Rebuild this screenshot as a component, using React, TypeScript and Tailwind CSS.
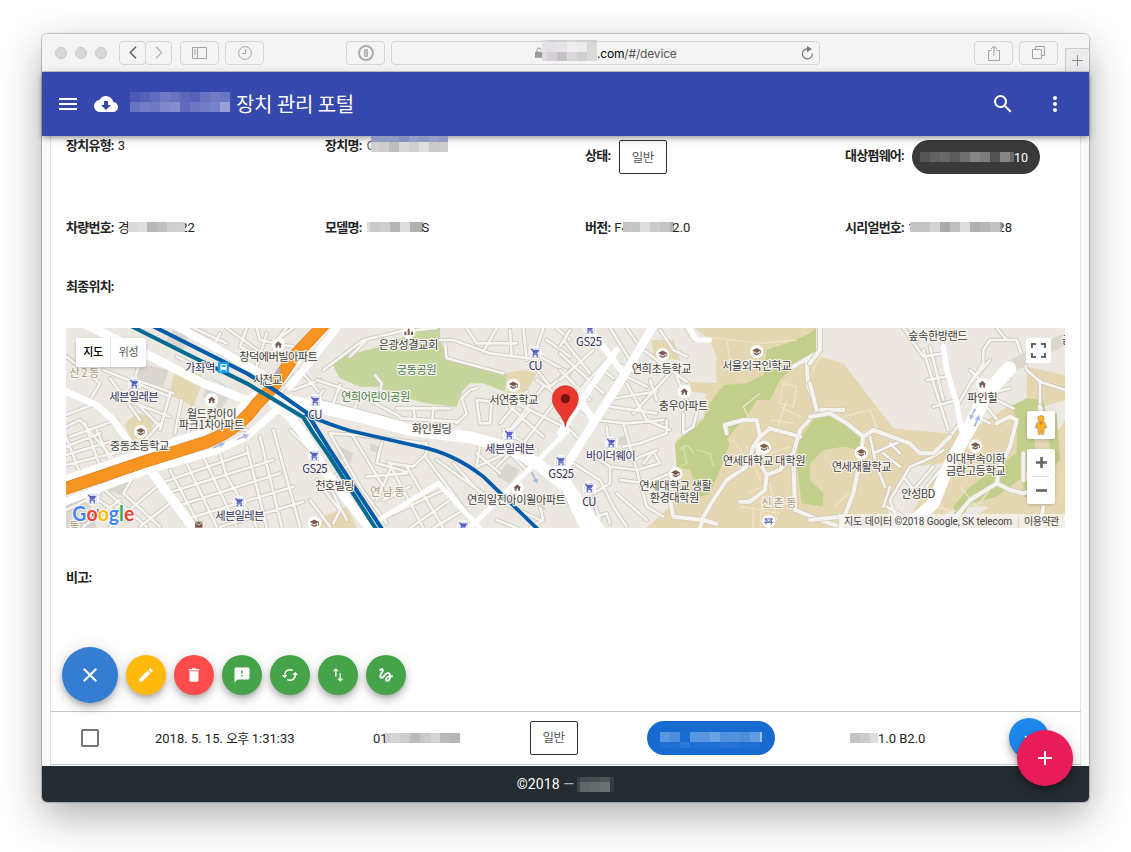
import React from "react";
import {
  MdAdd,
  MdCached,
  MdClose,
  MdCloudDownload,
  MdDelete,
  MdEdit,
  MdExpandMore,
  MdFeedback,
  MdGesture,
  MdHome,
  MdImportExport,
  MdMenu,
  MdMoreVert,
  MdSchool,
  MdSearch,
  MdShoppingCart,
} from "react-icons/md";

/* ---------- masked values ---------- */

function Mosaic({ rows, className = "" }: { rows: { h: number; cells: string[]; first?: number }[]; className?: string }) {
  return (
    <span className={`inline-block shrink-0 overflow-hidden ${className}`}>
      {rows.map((r, i) => (
        <span key={i} className="flex" style={{ height: r.h }}>
          {r.cells.map((c, j) => (
            <span key={j} className="shrink-0" style={{ width: j === 0 && r.first ? r.first : 10, backgroundColor: c }} />
          ))}
        </span>
      ))}
    </span>
  );
}

/* ---------- browser toolbar ---------- */

const toolButton = "flex h-6 items-center justify-center rounded-[4px] border border-[#d5d5d5] bg-[#f4f4f4] text-[#a5a5a5]";

function BrowserBar() {
  return (
    <div className="relative flex h-[38px] items-center rounded-t-[5px] border-b border-[#c6c4c9] bg-[#f4f4f4] pl-[13px]">
      <div className="flex gap-2">
        {[0, 1, 2].map((i) => (
          <span key={i} className="h-3 w-3 rounded-full border border-[#c9c9c9] bg-[#d8d8d8]" />
        ))}
      </div>
      <div className="ml-[12px] flex">
        <span className={`${toolButton} w-[27px]`}>
          <svg width="8" height="13" viewBox="0 0 8 13" fill="none" stroke="#666" strokeWidth="1.6"><path d="M7 .8L1.3 6.5 7 12.2" /></svg>
        </span>
        <span className={`${toolButton} -ml-px w-[27px]`}>
          <svg width="8" height="13" viewBox="0 0 8 13" fill="none" stroke="#b5b5b5" strokeWidth="1.3"><path d="M1 .8l5.7 5.7L1 12.2" /></svg>
        </span>
      </div>
      <span className={`${toolButton} ml-2 w-[39px]`}>
        <svg width="15" height="12" viewBox="0 0 15 12" fill="none" stroke="currentColor"><path d="M.5.5h14v11H.5zM5.5.5v11M2 3h2M2 5h2M2 7h2" /></svg>
      </span>
      <span className={`${toolButton} ml-[6px] w-[39px]`}>
        <svg width="14" height="14" viewBox="0 0 14 14" fill="none" stroke="currentColor"><circle cx="7" cy="7" r="6.4" /><path d="M7.5 3v4.5H4" /></svg>
      </span>
      <span className={`${toolButton} ml-[82px] w-[39px]`}>
        <svg width="16" height="16" viewBox="0 0 16 16"><circle cx="8" cy="8" r="7" fill="none" stroke="#adadad" strokeWidth="2" /><rect x="6" y="4" width="4" height="8" rx="1.5" fill="#adadad" /><path d="M8 5v6" stroke="#dedede" /></svg>
      </span>
      <div className={`${toolButton} relative ml-[6px] w-[429px]`}>
        <div className="flex h-full w-full items-center pl-[143px]">
          <svg className="-mt-px" width="7" height="11" viewBox="0 0 7 11"><path d="M2 5V3a2 2 0 014 0" fill="none" stroke="#999" /><rect x="0" y="4.8" width="7" height="6" rx=".6" fill="#999" /></svg>
          <Mosaic
            className="-mt-[4px] w-[55px]"
            rows={[
              { h: 2, first: 5, cells: ["#dcdcdc", "#cfcfcf", "#cfcfcf", "#d2d2d2", "#cfcfcf", "#cfcfcf", "#cfcfcf"] },
              { h: 10, first: 5, cells: ["#e4e2e6", "#e4e2e8", "#e6e4e8", "#eeecef", "#ebebeb", "#d9d9d9", "#e2e2e2"] },
              { h: 9, first: 5, cells: ["#dddbde", "#d4d0d5", "#c4c1c4", "#d9d7db", "#d0d0d0", "#dadada", "#cfcfcf"] },
            ]}
          />
          <span className="pt-[2px] font-[Inter] text-[12px] leading-6 tracking-[-0.17px] text-[#555]"><span className="text-black">.com</span>/#/device</span>
        </div>
        <svg className="absolute right-[5px] top-[4px]" width="13" height="14" viewBox="0 0 13 14"><path d="M7.4 3A5 5 0 1011.4 7.6" fill="none" stroke="#777" strokeWidth="1.2" /><path d="M6 0l5 3-5 3z" fill="#777" /></svg>
      </div>
      <span className={`${toolButton} ml-[154px] w-[39px]`}>
        <svg width="12" height="16" viewBox="0 0 12 16" fill="none" stroke="currentColor"><path d="M3.5 5.5h-3v10h11v-10h-3M6 11V1M3 4l3-3 3 3" /></svg>
      </span>
      <span className={`${toolButton} ml-[6px] w-[39px]`}>
        <svg width="13" height="13" viewBox="0 0 13 13" fill="none" stroke="currentColor"><path d="M.5 3.5h9v9h-9zM3.5 3.5v-3h9v9h-3" /></svg>
      </span>
      <span className="ml-[7px] flex h-[23px] w-[24px] items-center justify-center self-end border-l border-t border-[#cbcbcb] bg-[#ebeaed]">
        <svg width="11" height="11" viewBox="0 0 11 11" stroke="#888"><path d="M5.5 0v11M0 5.5h11" /></svg>
      </span>
    </div>
  );
}

/* ---------- application bar ---------- */

function AppBar() {
  return (
    <header className="relative z-10 flex h-16 items-center bg-[#3648ac] pl-[14px] text-white shadow-[0_2px_4px_-1px_rgba(0,0,0,.2),0_4px_5px_0_rgba(0,0,0,.14),0_1px_10px_0_rgba(0,0,0,.12)]">
      <MdMenu size={24} />
      <MdCloudDownload size={24} className="ml-[14px]" />
      <Mosaic
        className="-mt-1 ml-3 w-[101px]"
        rows={[
          { h: 10, cells: ["#4d5ab5", "#5562b9", "#5f6bbd", "#6e79c4", "#6874c1", "#5c68bc", "#5562b8", "#6773c0", "#6f7ac4", "#6b76c1", "#4251b0"] },
          { h: 10, cells: ["#6874c0", "#727dc5", "#6f79c3", "#7f89cb", "#858ecd", "#5f6bbd", "#6c77c2", "#727dc5", "#7781c7", "#99a0d5", "#4251b0"] },
        ]}
      />
      <h1 className="ml-[5px] pt-[2px] text-[20px] font-normal leading-7 tracking-[-0.3px]">장치 관리 포털</h1>
      <MdSearch size={24} className="ml-auto" />
      <MdMoreVert size={24} className="ml-7 mr-[22px]" />
    </header>
  );
}

/* ---------- map ---------- */

type Label = [number, number, number, string, string?];

const labels: Label[] = [
  [28, 118, 158, "산2동", "area"],
  [375, 466, 142, "가좌역", "shop"],
  [538, 774, 111, "창덕에버빌아파트"],
  [580, 667, 180, "사천교"],
  [148, 296, 231, "세븐일레븐", "shop"],
  [380, 530, 280, "월드컵아이"],
  [356, 553, 315, "파크1차아파트"],
  [150, 328, 378, "중동초등학교"],
  [745, 787, 285, "CU", "shop"],
  [727, 803, 447, "GS25", "shop"],
  [766, 883, 497, "천호빌딩"],
  [466, 613, 587, "세븐일레븐", "shop"],
  [80, 118, 580, "CU", "shop"],
  [28, 58, 617, "동", "area"],
  [956, 1135, 74, "은광성결교회"],
  [1010, 1130, 150, "궁동공원", "park"],
  [843, 1051, 229, "연희어린이공원", "park"],
  [1055, 1175, 327, "화인빌딩"],
  [1288, 1435, 238, "서연중학교"],
  [1406, 1447, 137, "CU", "shop"],
  [1275, 1425, 386, "세븐일레븐", "shop"],
  [1465, 1542, 461, "GS25", "shop"],
  [1221, 1518, 540, "연희일진아이윌아파트"],
  [930, 1035, 515, "연남동", "area"],
  [1548, 1626, 66, "GS25", "shop"],
  [1715, 1895, 145, "연희초등학교"],
  [1986, 2195, 137, "서울외국인학교"],
  [1796, 1945, 256, "충우아파트"],
  [1578, 1727, 407, "바이더웨이", "shop"],
  [1988, 2237, 422, "연세대학교 대학원"],
  [1738, 1956, 498, "연세대학교 생활"],
  [1769, 1918, 534, "환경대학원"],
  [1567, 1609, 545, "CU", "shop"],
  [2104, 2209, 548, "신촌동", "area"],
  [2545, 2723, 48, "숲속한방랜드"],
  [2722, 2813, 233, "파인힐"],
  [2315, 2495, 440, "연세재활학교"],
  [2658, 2837, 417, "이대부속이화"],
  [2658, 2837, 452, "금란고등학교"],
  [2524, 2626, 521, "안성BD"],
  [3005, 3040, 58, "금"],
];

const labelFill: Record<string, string> = { shop: "#2f3263", park: "#447c48", area: "#a79c85" };

const pois: [string, number, number][] = [
  ["cart", 223, 192], ["home", 655, 74], ["home", 455, 240], ["school", 242, 335], ["cart", 766, 243], ["cart", 763, 408],
  ["cart", 97, 537], ["cart", 538, 547], ["school", 763, 610], ["church", 1046, 36], ["cart", 1426, 99], ["school", 1360, 196],
  ["cart", 1348, 345], ["cart", 1503, 424], ["home", 1372, 503], ["cart", 1210, 620], ["cart", 1590, 28], ["school", 1808, 103],
  ["school", 2090, 95], ["home", 1873, 215], ["cart", 1654, 369], ["school", 2112, 382], ["school", 1847, 461], ["cart", 1588, 504],
  ["gate", 2126, 604], ["home", 2767, 193], ["school", 2404, 398], ["school", 2746, 378],
];

function Poi({ kind, x, y }: { kind: string; x: number; y: number }) {
  const at = { x: x - 14, y: y - 14, size: 28 };
  return (
    <g>
      <circle cx={x} cy={y} r="20" fill="#fff" />
      {kind === "cart" && <MdShoppingCart {...at} color="#5763bd" stroke="#5763bd" strokeWidth="1" />}
      {kind === "home" && <MdHome {...at} color="#7d5c50" />}
      {kind === "school" && <MdSchool x={x - 15} y={y - 15} size={30} color="#7d5c50" />}
      {kind === "church" && <path transform={`translate(${x} ${y})`} d="M-13 9V-1h6V9zm10 0v-16l3-5 3 5V9zM7 9V-1h6V9z" fill="#7d5c50" />}
      {kind === "gate" && <path transform={`translate(${x} ${y})`} d="M-13-7h26M-13 3h26M-8-9V10M8-9V10M-8-6L0 3l8-9" stroke="#5763bd" strokeWidth="3" fill="none" />}
    </g>
  );
}

/* Street geometry, one entry per 250px sheet of the map. */
const streets: { dx: number; d: string }[] = [
  {
    dx: 0,
    d: "M18 285L110 250M18 320L60 300 180 440M30 350L170 300M18 380L120 340M18 405L150 365M18 435L180 395M75 310L120 440M110 330L150 420M18 350L60 460M150 175L240 300M20 110L120 190 90 240M130 150L330 230M240 120L210 230 300 320M200 240L330 290M230 180L340 220M260 110L340 150M350 110L420 145M350 300L560 330M330 220L300 330M365 240L345 340M400 260L385 340M430 180L560 240M300 310L230 390M420 50L560 130M500 24L620 110M560 24L540 80 620 120M590 24L600 60 700 80M700 24L650 60 680 24M620 40L590 140M400 24L500 70M480 40L460 80M330 450L420 620M380 430L470 620M430 410L530 620M480 400L500 470 590 620M300 490L560 400M320 520L640 420M345 560L660 460M370 600L700 500M480 620L730 545M560 380L620 620M600 350L665 620M640 330L720 620M690 330L760 400M100 480L260 620M60 500L200 600M18 570L120 520M220 470L190 520 300 620M150 620L290 500M70 620L180 540M240 620L330 550M700 170L660 220M720 150L780 220M700 210L780 180",
  },
  {
    dx: 750,
    d: "M20 180L140 220 270 290M40 210L20 240 250 300M90 195L70 250M150 222L130 275M260 265L420 265M270 295L440 305M310 262L320 335M370 262L365 330M440 310L470 280 455 235 480 210 500 205M500 240L510 310 540 310 545 245 505 240M40 150L160 60 270 35 380 24M120 110L170 60M390 60L430 60 540 100 660 115M405 70L410 115 580 160M470 24L500 70 620 70M560 24L520 95M600 30L605 105M640 24L650 120M700 24L665 130 720 200M740 24L780 60M690 110L780 160M680 180L780 250M600 260L700 350M650 215L570 310M700 200L600 330M570 370L660 270M740 240L640 370M590 235L780 330M580 330L680 390M720 200L780 150M710 60L780 110M60 340L140 345 345 370M60 340L150 500 230 610M130 350L220 500M215 370L200 430 290 455M350 370L350 400 310 440 240 430M235 425L340 624M290 440L400 624M345 410L480 590M430 430L520 530M380 420L560 550M500 400L570 460M510 370L500 440 590 400M560 440L600 400 650 450M560 540L690 600M220 540L300 500M170 470L290 460M230 590L400 510M300 624L420 540M370 624L460 570M560 600L620 624M60 500L110 600M20 480L90 570 70 610M690 560L700 600 660 624M0 540L60 620M110 440L60 480M240 450L200 540M195 165L215 190 210 220 250 225",
  },
  {
    dx: 1500,
    d: "M180 160L260 200M160 235L290 215M200 190L260 300 330 330M0 220L80 280M110 300L200 310 310 300M140 320L150 400M190 310L230 450 260 560 310 590M150 260L290 280M220 280L330 160M270 180L290 240M320 300L320 340 240 370 190 380M370 280L370 340 400 320 410 280M350 170L380 240M250 90L380 185M300 30L340 90 380 110M90 400L150 440 230 450M120 400L220 420 290 390M150 440L150 490 100 520M40 430L120 480 160 560 200 620M100 540L120 600 90 620M170 520L260 600M180 480L260 490 330 460M230 450L300 430 280 395 250 430M0 150L90 240M0 100L130 220M10 60L90 160M30 30L0 80M0 180L100 90M50 220L150 110M150 24L210 120M200 24L240 80M20 280L90 180M0 300L60 360M130 150L160 175M110 590L140 580 150 610M170 130L230 160M380 24L400 60",
  },
  {
    dx: 2250,
    d: "M340 90L380 220 415 330M360 80L400 240M280 24L340 110 400 100M350 180L410 170M370 260L440 240M390 24L400 80M440 260L480 190 540 120M480 190L520 130 520 90 540 60 620 60 650 150 690 185 765 210M560 24L590 60M300 24L320 60M190 400L280 360M220 400L270 440M240 370L270 400M240 540L300 440 370 410 400 390M280 470L320 520M260 600L240 540M550 180L600 180M560 215L600 205M560 240L610 265M530 260L570 310M500 290L540 310M690 180L690 260M180 350L200 440 225 500M240 500L220 560M420 350L450 310M310 510L370 440M350 500L390 450M230 560L300 600M480 150L530 200",
  },
];

const campusRoads: { dx: number; d: string }[] = [
  {
    dx: 1500,
    d: "M500 340L495 315 550 300 590 300 600 350 580 380 560 440 500 480 460 540 430 590M600 350L630 325 720 350M850 270L775 270 720 330 700 400 660 450 620 465 600 430 590 370M620 465L615 510 570 545 540 545M780 90L740 130 745 200 775 275M700 140L760 105M700 420L705 570 780 600 840 620M330 540L340 590 430 600 470 612M430 590L420 624M330 480L320 540 380 540",
  },
  {
    dx: 2250,
    d: "M0 290L60 280 110 310 160 350 190 330 300 370 330 400 370 400 420 350M160 350L150 420 130 520 90 624M30 24L30 90 0 130M0 190L20 270M620 300L600 380 570 440 560 490 600 510 640 520 700 500M560 490L480 540 430 600M620 300L600 290 560 310M0 600L90 590M700 560L690 624M690 260L700 330M640 480L640 400",
  },
];

const GREEN = "#c1cf8b";
const TAN = "#e5d7b1";

function MapDrawing() {
  return (
    <svg className="block h-[200px] w-[999px]" viewBox="18 24 2997 600">
      <rect x="18" y="24" width="2997" height="600" fill="#ece8e1" />

      <g fill="#dad6ce">
        <path d="M240 130L325 150 310 200 235 175zM440 195L520 215 480 270 430 230zM340 30L385 50 370 90 310 75zM130 470L200 490 195 530 120 500zM18 530L90 540 110 624 18 624z" />
        <path d="M840 380L880 400 870 430 830 410zM930 370L960 380 950 400 930 390zM1340 430L1380 450 1350 490 1310 470z" />
        <path d="M1680 350L1700 350 1700 370 1660 380z" />
      </g>
      <path fill={TAN} d="M345 140L425 165 430 180 400 258 328 225zM205 300L235 280 285 295 268 355 215 360 195 315zM1335 160L1390 150 1430 160 1400 215 1340 220zM790 590L860 560 890 624 780 624zM1775 60L1840 60 1860 120 1780 115z" />
      <path fill={TAN} d="M1890 185L1970 190 1965 100 1950 60 1905 24 2268 24 2268 106 2350 130 2500 325 2660 340 2660 440 2550 520 2480 624 1760 624 1850 540 1850 360 1930 290 1940 220 1895 215z" />
      <path fill={TAN} d="M2660 340L2750 320 2850 255 2890 300 2890 560 2690 560 2600 624 2540 624zM2900 140L3015 165 3015 240 2950 260 2900 230zM2900 480L3015 300V624H2700z" />
      <path fill="#ece8e1" d="M1900 24L1940 70 1970 110 1960 170 1900 180 1870 100zM2550 440L2650 430 2560 560 2500 624 2480 560z" />
      <path fill="#c5d69d" d="M815 130L860 105 960 80 1080 30 1140 24 1140 60 1160 110 1340 165 1335 215 1270 190 1230 190 1205 215 1190 260 1100 250 1000 225 960 200 900 200 840 175z" />
      <g fill={GREEN}>
        <path d="M2120 90L2180 70 2250 40 2268 24 2268 95 2200 140 2160 180 2130 240 2090 240 2060 290 2030 320 2000 360 2010 370 1980 450 1950 520 1920 530 1890 450 1850 440 1845 370 1930 300 1950 250 1990 195 2060 190 2110 165z" />
        <path d="M2300 282L2360 300 2400 345 2400 390 2350 380 2290 390 2250 430 2250 480 2290 520 2290 560 2225 550 2210 430 2215 360 2260 300z" />
        <path d="M2900 235L2950 240 2960 290 2930 420 2890 470 2810 530 2730 550 2690 624 2680 560 2730 500 2810 440 2870 400 2870 290 2850 260z" />
        <path d="M2950 270L2990 280 3000 420 2940 490 2900 470zM2890 480L2940 500 2940 540 2890 530z" />
        <path d="M560 340L600 310 610 320 580 345z" />
      </g>
      <path fill={TAN} d="M2920 330L2960 310 2975 420 2930 440z" />
      <path fill="#dfc5c4" d="M2370 590L2420 600 2410 624 2360 624z" />

      <g fill="none" stroke="#eee4ca" strokeWidth="4">
        <path d="M1930 50L2100 70 2210 60M2000 60L2010 120M2170 190L2210 200 2200 260 2160 250zM2160 260L2220 290M2130 300L2200 310M2060 380L2100 480M2130 400L2190 380M2060 520L2130 490 2150 600M2080 560L2080 624M2110 500L2100 620M2040 560L2160 580M2020 360L2060 420M2180 240L2150 330M2070 300L2050 260 2100 220" />
        <path d="M2350 290L2430 270 2450 320 2400 340M2280 110L2250 170M2700 500L2750 560 2820 470M2620 530L2700 620M2740 430L2790 440M2620 560L2720 580M2320 560L2380 510" />
      </g>
      <g fill="none" stroke="#cfdfa4" strokeWidth="5">
        <path d="M1870 380L1880 430 1860 440M1910 390L1950 400 1960 440M1860 390Q1880 360 1900 400" />
      </g>

      {streets.map((s) => (
        <g key={s.dx} transform={`translate(${s.dx} 0)`} fill="none" strokeLinecap="round" strokeLinejoin="round">
          <path d={s.d} stroke="#cdc6bb" strokeWidth="13" />
          <path d={s.d} stroke="#f6f4f0" strokeWidth="8" />
        </g>
      ))}
      {campusRoads.map((s) => (
        <g key={s.dx} transform={`translate(${s.dx} 0)`} fill="none" strokeLinecap="round" strokeLinejoin="round">
          <path d={s.d} stroke="#d3cab9" strokeWidth="17" />
          <path d={s.d} stroke="#f5f3ee" strokeWidth="12" />
        </g>
      ))}

      <path d="M2850 140L3030 50" fill="none" stroke="#dcd8cf" strokeWidth="36" />

      {/* main roads */}
      <g fill="none" stroke="#fff" strokeLinejoin="round" strokeLinecap="round">
        <path d="M70 10L270 108 420 185 570 245" strokeWidth="26" />
        <path d="M335 10L470 85 610 165" strokeWidth="24" />
        <path d="M0 482L300 378 430 335 520 285 580 225" strokeWidth="20" />
        <path d="M0 552L260 452 470 392 560 350 650 270" strokeWidth="22" />
        <path d="M18 215L110 255 160 300 210 370" strokeWidth="20" />
        <path d="M275 455L330 530 400 624" strokeWidth="28" />
        <path d="M640 250L690 290 750 370 800 460 940 640" strokeWidth="28" />
        <path d="M640 215L720 110 800 20M690 200L830 24" strokeWidth="22" />
        <path d="M660 240L750 255 900 290 1050 330 1230 352 1350 385 1430 430 1520 500 1580 624" strokeWidth="36" />
        <path d="M1490 460L1560 560 1620 640" strokeWidth="44" />
        <path d="M950 605L1135 490 1260 624M1220 634L1430 425 1520 335" strokeWidth="15" />
        <path d="M1500 340L1600 190 1670 90M1600 40L1690 160M1560 240L1600 300" strokeWidth="19" />
        <path d="M1510 450L1600 310 1690 170 1790 0" strokeWidth="25" />
        <path d="M1890 24L1910 60 1950 60" strokeWidth="14" />
        <path d="M2650 80L2660 150 2690 250 2705 330" strokeWidth="16" />
        <path d="M2540 624L2620 550 2660 450 2720 340" strokeWidth="38" />
        <path d="M2720 340L2780 220 2848 145" strokeWidth="42" />
      </g>
      <path d="M1432 520L1460 575 1440 560zM1500 500L1530 560 1512 545z" fill="#d9d4ca" />

      <path d="M0 511L250 426 440 366Q540 325 590 252L640 200 700 112 800 5" fill="none" stroke="#df8524" strokeWidth="38" />
      <path d="M0 511L250 426 440 366Q540 325 590 252L640 200 700 112 800 5" fill="none" stroke="#f89522" strokeWidth="33" />

      {/* railway */}
      <g fill="none" strokeLinejoin="round">
        <path d="M470 100L510 124M455 175L500 200" stroke="#6fc0e8" strokeWidth="2" strokeDasharray="4 2" />
        <path d="M205 14L400 112 560 190 640 238 730 292 760 340 800 397 950 630" stroke="#016a91" strokeWidth="12" />
        <path d="M270 14L560 160 640 208 740 278 810 390 968 630" stroke="#005ba9" strokeWidth="12" />
        <path d="M735 282Q810 315 870 332L1080 380Q1180 400 1270 470L1440 634" stroke="#005ba9" strokeWidth="11" />
      </g>

      <g fill="#a9b4e6">
        <path d="M458 383l20-11-2-6 19 3-13 14-2-6-20 9zM530 357l20-9-2-6 20 2-13 14-2-6-20 8z" />
        <path d="M642 165l12-20 8 2-10 22zM1418 456l10 22 6-1-2 14-14-10 6-3-12-20zM2744 265l-10 20-6-2 2 16 12-10-5-3 12-18zM2740 318l10-18-6-2 14-14 2 18-5-1-9 19z" />
      </g>

      <g transform="translate(474 126)">
        <rect width="33" height="33" rx="3" fill="#159de8" />
        <rect x="7" y="6" width="19" height="17" rx="3" fill="#fff" />
        <path d="M10 10h13v5H10z" fill="#159de8" />
        <path d="M10 23l-3 5M23 23l3 5" stroke="#fff" strokeWidth="3" />
      </g>

      {pois.map(([k, x, y], i) => (
        <Poi key={i} kind={k} x={x} y={y} />
      ))}
      <path d="M405 605h22v18h-22z" fill="#7d5c50" />
      <path d="M406 607l10 8 10-8" fill="none" stroke="#fff" strokeWidth="2.5" />

      <g fontFamily='"Noto Sans CJK KR", sans-serif' fontSize="34" stroke="#f7f4ee" strokeWidth="7" strokeLinejoin="round">
        {labels.map(([x1, x2, y, text, kind], i) => (
          <text key={i} x={x1} y={y + 13} textLength={x2 - x1} fill={labelFill[kind ?? ""] ?? "#3f3f3f"} style={{ paintOrder: "stroke" }}>
            {text}
          </text>
        ))}
      </g>

      <g transform="translate(1516 198)">
        <path d="M0 122C-4 88-39 72-39 38a39 39 0 0178 0C39 72 4 88 0 122z" fill="#e9392f" stroke="#c9261d" strokeWidth="2" />
        <circle cy="38" r="14" fill="#7c130e" />
      </g>

      <text x="37" y="603" textLength="186" lengthAdjust="spacingAndGlyphs" fontFamily="Lato, sans-serif" fontWeight="700" fontSize="61" stroke="#fff" strokeWidth="6" style={{ paintOrder: "stroke" }}>
        <tspan fill="#4285f4">G</tspan>
        <tspan fill="#ea4335">o</tspan>
        <tspan fill="#fbbc05">o</tspan>
        <tspan fill="#4285f4">g</tspan>
        <tspan fill="#34a853">l</tspan>
        <tspan fill="#ea4335">e</tspan>
      </text>
    </svg>
  );
}

function MapPanel() {
  return (
    <div className="relative h-[200px] w-[999px] overflow-hidden">
      <MapDrawing />
      <div className="absolute left-[10px] top-[10px] flex h-[29px] w-[70px] rounded-[2px] bg-white text-center text-[11px] leading-[29px] tracking-[-0.4px] shadow-[0_1px_4px_-1px_rgba(0,0,0,.3)]">
        <span className="w-[35px] border-r border-[#e6e6e6] font-medium text-black">지도</span>
        <span className="w-[35px] text-[#565656]">위성</span>
      </div>
      <div className="absolute left-[960px] top-[10px] flex h-[25px] w-[25px] items-center justify-center bg-white">
        <svg width="15" height="15" viewBox="0 0 15 15" fill="none" stroke="#666" strokeWidth="2"><path d="M1 5V1h4M10 1h4v4M14 10v4h-4M5 14H1v-4" /></svg>
      </div>
      <div className="absolute left-[961px] top-[83px] flex h-7 w-7 items-center justify-center rounded-[2px] bg-white shadow-[0_1px_4px_-1px_rgba(0,0,0,.3)]">
        <svg width="14" height="20" viewBox="0 0 14 20"><path d="M3 7.2h8l1.8 5.6-1.8.6-.6-1.6-.6 7.6H7.6L7 15l-.6 4.4H4.2l-.6-7.6-.6 1.6-1.8-.6z" fill="#fbb321" stroke="#8f8a80" strokeWidth=".5" /><circle cx="7" cy="3.7" r="3.2" fill="#fbb321" stroke="#a08a60" strokeWidth=".6" /><path d="M4.5 7.2L7 10l2.5-2.8z" fill="#e57b1c" /></svg>
      </div>
      <div className="absolute left-[961px] top-[121px] flex h-[55px] w-7 flex-col items-center rounded-[2px] bg-white shadow-[0_1px_4px_-1px_rgba(0,0,0,.3)]">
        <span className="flex h-[27px] items-center"><svg width="11" height="11" viewBox="0 0 11 11" stroke="#666" strokeWidth="2.6"><path d="M5.5 0v11M0 5.5h11" /></svg></span>
        <span className="h-px w-[18px] bg-[#e2e2e2]" />
        <span className="flex h-[27px] items-center"><svg width="11" height="11" viewBox="0 0 11 11" stroke="#666" strokeWidth="2.6"><path d="M0 5.5h11" /></svg></span>
      </div>
      <div className="absolute bottom-0 right-0 flex h-[14px] bg-[#f5f5f5]/75 text-[10px] leading-[15px] text-[#444]">
        <span className="w-[180px] whitespace-nowrap border-r border-[#ddd9d0] pl-[5px] tracking-[-0.08px]">지도 데이터 ©2018 Google, SK telecom</span>
        <span className="w-[46px] whitespace-nowrap pl-[5px] tracking-[-0.5px]">이용약관</span>
      </div>
    </div>
  );
}

/* ---------- details ---------- */

const K = "font-bold tracking-[-0.75px] whitespace-nowrap";

function StatusChip() {
  return (
    <span className="flex h-[34px] w-12 items-center justify-center rounded-[2px] border border-[#333] pr-px pt-px text-[12.5px] tracking-[-0.5px] text-[#555]">일반</span>
  );
}

function Fab({ color, children }: { color: string; children: React.ReactNode }) {
  return (
    <span className={`flex h-10 w-10 items-center justify-center rounded-full text-white shadow-[0_3px_5px_-1px_rgba(0,0,0,.2),0_6px_10px_0_rgba(0,0,0,.14),0_1px_14px_0_rgba(0,0,0,.1)] ${color}`}>
      {children}
    </span>
  );
}

function Details() {
  return (
    <section className="pl-4 leading-5">
      <div className="flex h-[82px]">
        <div className="w-[259px]"><b className={K}>장치유형:</b><span className="ml-1">3</span></div>
        <div className="flex w-[260px] items-start">
          <b className={K}>장치명:</b>
          <span className="ml-[5px] w-[4px] overflow-hidden text-[#555]">G</span>
          <Mosaic
            className="relative z-20 w-[77px]"
            rows={[
              { h: 6, first: 8, cells: ["#8f97c3", "#9199c2", "#9199c2", "#868eb9", "#969dc6", "#9099c3", "#999fc7", "#9098c2"] },
              { h: 10, first: 8, cells: ["#d2d2d2", "#cdcdcd", "#bdbdbd", "#d8d8d8", "#d0d0d0", "#dedede", "#cacaca", "#cccccc"] },
            ]}
          />
        </div>
        <div className="flex w-[260px] items-start pt-1">
          <b className={`${K} mr-[9px] mt-[6px]`}>상태:</b>
          <StatusChip />
        </div>
        <div className="flex items-start pt-1">
          <b className={`${K} mr-[8px] mt-[6px]`}>대상펌웨어:</b>
          <span className="flex h-[34px] w-32 items-center rounded-full bg-[#3a3a3a] pl-2 text-[12.5px] text-white">
            <Mosaic
              className="w-[94px]"
              rows={[{ h: 10, cells: ["#545454", "#626262", "#686868", "#5a5a5a", "#707070", "#868686", "#7c7c7c", "#535353", "#868686", "#696969"] }]}
            />
            <span className="pt-px">10</span>
          </span>
        </div>
      </div>

      <div className="flex h-[59px]">
        <div className="flex w-[259px]">
          <b className={K}>차량번호:</b>
          <span className="ml-1 w-[10px] overflow-hidden whitespace-nowrap">경</span>
          <Mosaic className="mt-1 w-[57px]" rows={[{ h: 10, first: 9, cells: ["#dadada", "#dedede", "#b8b8b8", "#bfbfbf", "#cfcfcf", "#d0d0d0"] }]} />
          <span className="flex w-[10px] justify-end overflow-hidden">22</span>
        </div>
        <div className="flex w-[260px]">
          <b className={K}>모델명:</b>
          <Mosaic className="ml-[5px] mt-1 w-[56px]" rows={[{ h: 10, first: 3, cells: ["#dedede", "#cacaca", "#cfcfcf", "#b6b6b6", "#dddddd", "#b0b0b0", "#a9a9a9"] }]} />
          <span className="-ml-[1px]">S</span>
        </div>
        <div className="flex w-[260px]">
          <b className={K}>버전:</b>
          <span className="ml-1 w-[9px] overflow-hidden">F4</span>
          <Mosaic className="mt-1 w-[51px]" rows={[{ h: 10, first: 7, cells: ["#c4c4c4", "#c6c6c6", "#dedede", "#cacaca", "#c4c4c4", "#b0b0b0"] }]} />
          <span className="-ml-[2px]">2.0</span>
        </div>
        <div className="flex">
          <b className={K}>시리얼번호:</b>
          <span className="ml-1 w-[2px] overflow-hidden">1</span>
          <Mosaic className="mt-1 w-[92px]" rows={[{ h: 10, cells: ["#c3c3c3", "#c3c3c3", "#d4d4d4", "#aaaaaa", "#c0c0c0", "#dedede", "#b0b0b0", "#b6b6b6", "#c2c2c2", "#a0a0a0"] }]} />
          <span className="flex w-[10px] justify-end overflow-hidden">28</span>
        </div>
      </div>

      <div className="h-[51px]"><b className={K}>최종위치:</b></div>
      <MapPanel />
      <div className="h-[119px] pt-[40px]"><b className={K}>비고:</b></div>

      <div className="-ml-1 flex h-14 items-center gap-2">
        <span className="flex h-14 w-14 items-center justify-center rounded-full bg-[#347dd3] text-white shadow-[0_3px_5px_-1px_rgba(0,0,0,.2),0_6px_10px_0_rgba(0,0,0,.14),0_1px_18px_0_rgba(0,0,0,.12)]">
          <MdClose size={24} />
        </span>
        <Fab color="bg-[#ffb90f]"><MdEdit size={18} /></Fab>
        <Fab color="bg-[#ff4b4b]"><MdDelete size={18} /></Fab>
        <Fab color="bg-[#45a44a]"><MdFeedback size={18} /></Fab>
        <Fab color="bg-[#45a44a]"><MdCached size={18} /></Fab>
        <Fab color="bg-[#45a44a]"><MdImportExport size={18} /></Fab>
        <Fab color="bg-[#45a44a]"><MdGesture size={18} /></Fab>
      </div>
    </section>
  );
}

function DeviceRow() {
  return (
    <div className="mt-2 flex h-[54px] items-center border-y border-[#c6c6c6]">
      <div className="w-[105px] pl-[31px]"><span className="block h-[18px] w-[18px] rounded-[2px] border-2 border-[#757575]" /></div>
      <div className="w-[218px] pt-px">2018. 5. 15. <span className="tracking-[-0.75px]">오후</span> 1:31:33</div>
      <div className="flex w-[157px] items-center">
        <span className="w-[12px] overflow-hidden pt-px">01</span>
        <Mosaic className="-mt-px w-[76px]" rows={[{ h: 10, first: 5, cells: ["#cfcfcf", "#d5d5d5", "#cdcdcd", "#bbbbbb", "#c9c9c9", "#d4d4d4", "#bababa", "#b5b5b5", "#f5f5f5"] }]} />
      </div>
      <div className="w-[117px]"><StatusChip /></div>
      <div className="w-[203px]">
        <span className="flex h-[34px] w-32 items-center justify-center rounded-full bg-[#176bd0]">
          <Mosaic
            className="mt-[3px] w-[102px]"
            rows={[
              { h: 10, cells: ["#5896df", "#4c8edc", "#1b6ed1", "#5896df", "#5896df", "#6aa3e4", "#4f90dd", "#5292de", "#4c8edc", "#6399e0", "#9ec2ef"] },
              { h: 6, cells: ["#1f70d1", "#1d6fd1", "#2b78d4", "#1d6fd1", "#1d6fd1", "#1d6fd1", "#2773d3", "#2371d2", "#1d6fd1", "#1d6fd1", "#176bd0"] },
            ]}
          />
        </span>
      </div>
      <div className="flex w-[159px] items-center">
        <Mosaic className="-mt-px w-[28px]" rows={[{ h: 10, cells: ["#c3c3c3", "#cdcdcd", "#dedede"] }]} />
        <span className="pt-px">1.0 B2.0</span>
      </div>
      <Fab color="bg-[#1e88ee]"><MdExpandMore size={18} /></Fab>
    </div>
  );
}

export default function App() {
  return (
    <div className="h-[852px] w-[1131px] overflow-hidden bg-white pl-[42px] pt-[34px] font-[Roboto,'Noto_Sans_CJK_KR',sans-serif] text-[13px] text-[#222]">
      <div className="relative flex h-[768px] w-[1047px] flex-col rounded-[5px] shadow-[0_0_1px_1px_rgba(0,0,0,.2),0_14px_40px_rgba(0,0,0,.32)]">
        <BrowserBar />
        <AppBar />
        <main className="h-[630px] overflow-hidden bg-[#fafafa] px-2">
          <div className="h-full border-x border-[#e4e4e4] bg-white [&>*]:-mx-px">
            <Details />
            <DeviceRow />
          </div>
        </main>
        <footer className="flex h-9 items-center justify-center rounded-b-[5px] bg-[#242b31] text-white">
          <span className="pt-px text-[14px] tracking-[0.1px]">©2018 <span className="text-[#a9adb0]">—</span></span>
          <Mosaic
            className="ml-[3px] w-[37px]"
            rows={[
              { h: 5, first: 3, cells: ["#343b40", "#454c50", "#474d51", "#4d5458", "#3a4146"] },
              { h: 10, first: 3, cells: ["#40474b", "#5f6669", "#626a6c", "#6b7274", "#343b40"] },
            ]}
          />
        </footer>
        <span className="absolute left-[975px] top-[696px] z-20 flex h-14 w-14 items-center justify-center rounded-full bg-[#e91c5a] text-white shadow-[0_3px_5px_-1px_rgba(0,0,0,.2),0_6px_10px_0_rgba(0,0,0,.14),0_1px_18px_0_rgba(0,0,0,.12)]">
          <MdAdd size={24} />
        </span>
      </div>
    </div>
  );
}
